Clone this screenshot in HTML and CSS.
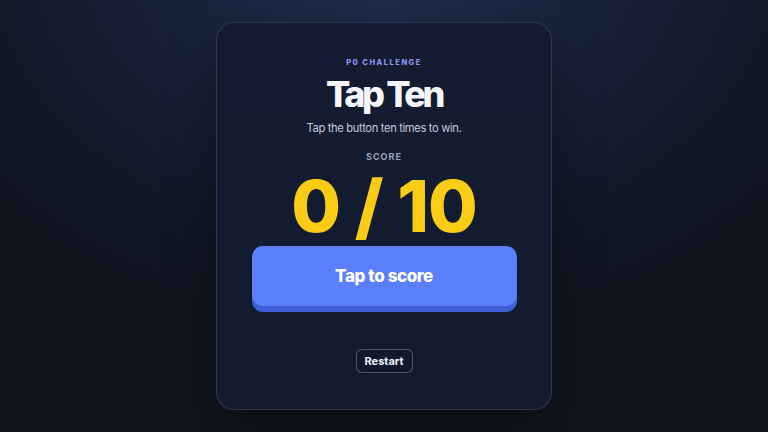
FILE: index.html
```html
<!DOCTYPE html>
<html lang="en">
<head>
<meta charset="utf-8">
<title>Tap Ten</title>
<link rel="stylesheet" href="styles.css">
</head>
<body>
<main class="page">
  <section class="card">
    <div class="eyebrow">P0 CHALLENGE</div>
    <h1 class="title">Tap Ten</h1>
    <p class="subtitle">Tap the button ten times to win.</p>
    <div class="score-label">SCORE</div>
    <div class="score">0 / 10</div>
    <button class="tap-btn" type="button">Tap to score</button>
    <button class="restart-btn" type="button">Restart</button>
  </section>
</main>
</body>
</html>
```

FILE: styles.css
```css
* { box-sizing: border-box; }
html, body {
  margin: 0;
  height: 100%;
}
body {
  font-family: Inter, "Noto Sans", "Liberation Sans", sans-serif;
  background: radial-gradient(ellipse 70% 90% at 50% -10%, #22304f 0%, #18223a 40%, #111827 75%, #10151f 100%);
  background-color: #10151f;
}
.page {
  height: 432px;
  display: flex;
  justify-content: center;
  padding-top: 22px;
}
.card {
  width: 336px;
  height: 388px;
  border: 1px solid rgba(148, 163, 184, 0.2);
  border-radius: 18px;
  background: linear-gradient(180deg, #141c31 0%, #131b2f 100%);
  box-shadow: 0 20px 50px rgba(0, 0, 0, 0.35);
  display: flex;
  flex-direction: column;
  align-items: center;
  padding-top: 34px;
}
.eyebrow {
  font-size: 7.5px;
  line-height: 12px;
  font-weight: 800;
  letter-spacing: 1.5px;
  color: #8796ee;
}
.title {
  margin: 5px 0 0;
  font-size: 36px;
  line-height: 40px;
  font-weight: 800;
  letter-spacing: -3.4px;
  color: #f4f6fb;
}
.subtitle {
  margin: 5px 0 0;
  font-size: 11.2px;
  line-height: 18px;
  letter-spacing: -0.35px;
  color: #c3cbda;
}
.score-label {
  margin-top: 14px;
  font-size: 9px;
  line-height: 12px;
  font-weight: 700;
  letter-spacing: 1px;
  color: #98a3b8;
}
.score {
  margin-top: 7px;
  font-size: 72px;
  line-height: 72px;
  font-weight: 800;
  letter-spacing: -1px;
  color: #facc15;
}
.tap-btn {
  margin-top: 4px;
  width: 265px;
  height: 60px;
  border: none;
  border-radius: 11px;
  background: #5b7ffb;
  box-shadow: 0 6px 0 #3d5fd6;
  color: #ffffff;
  font-family: inherit;
  font-size: 17px;
  font-weight: 800;
  letter-spacing: -0.4px;
}
.restart-btn {
  margin-top: 43px;
  width: 57px;
  height: 24px;
  padding: 0;
  border: 1px solid rgba(148, 163, 184, 0.45);
  border-radius: 6px;
  background: #111a2c;
  color: #eef2f8;
  font-family: inherit;
  font-size: 11px;
  font-weight: 700;
}
```
